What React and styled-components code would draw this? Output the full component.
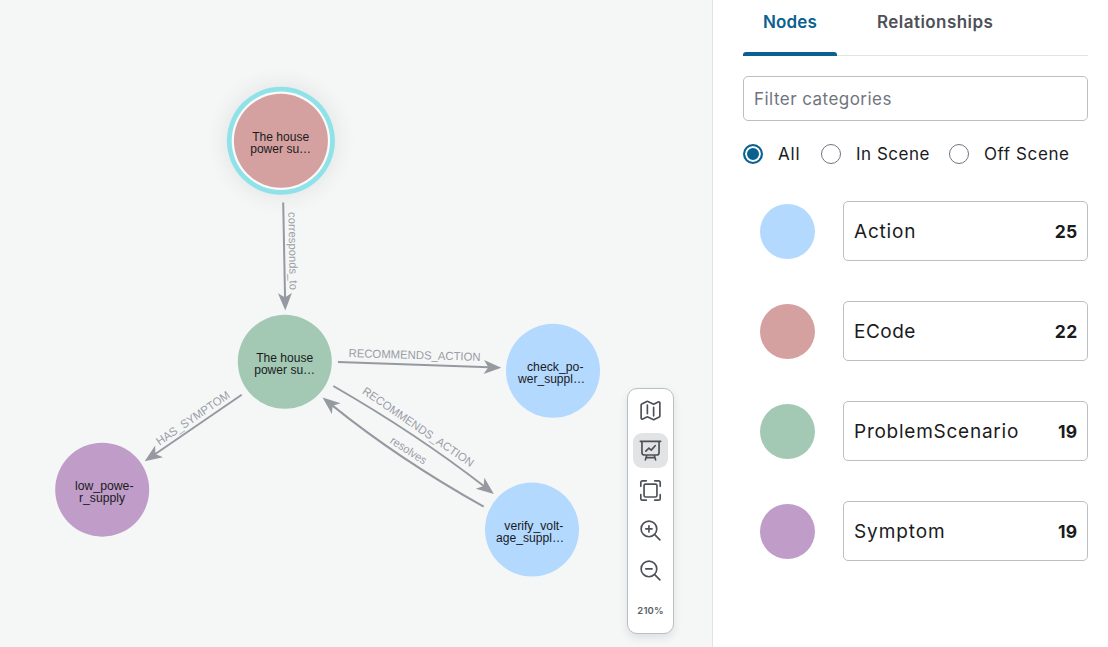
import React from 'react';
import styled, { createGlobalStyle } from 'styled-components';

const GlobalStyle = createGlobalStyle`
  *, *::before, *::after { box-sizing: border-box; }
  body { margin: 0; background: #fff; font-family: Inter, "Liberation Sans", sans-serif; color: #1a1b1d; }
`;

const Layout = styled.div`
  display: flex;
  width: 1108px;
  height: 647px;
  overflow: hidden;
`;

const GraphArea = styled.main`
  position: relative;
  flex: 0 0 712px;
  background: #f5f7f7;
`;

const Canvas = styled.svg`
  display: block;
  font-family: "Liberation Sans", Arial, sans-serif;
`;

const Toolbar = styled.div`
  position: absolute;
  top: 388px;
  left: 627px;
  width: 47px;
  height: 246px;
  padding-top: 4px;
  display: flex;
  flex-direction: column;
  align-items: center;
  gap: 5px;
  background: #fff;
  border: 1px solid #bbbec3;
  border-radius: 10px;
  box-shadow: 0 4px 8px rgba(12, 26, 37, 0.1);
`;

const ToolButton = styled.button`
  display: flex;
  align-items: center;
  justify-content: center;
  width: 35px;
  height: 35px;
  padding: 0;
  border: 0;
  border-radius: 9px;
  color: #4d5157;
  background: ${(p) => (p.$active ? '#e2e3e5' : 'transparent')};
`;

const ZoomLevel = styled.span`
  display: flex;
  align-items: center;
  height: 35px;
  font-size: 9.5px;
  font-weight: 600;
  letter-spacing: 0.15px;
  color: #5a5f66;
`;

const Icon = styled.svg`
  width: 25px;
  height: 25px;
  fill: none;
  stroke: currentColor;
  stroke-width: 1.6;
  stroke-linecap: round;
  stroke-linejoin: round;
`;

const Panel = styled.aside`
  flex: 1;
  display: flex;
  flex-direction: column;
  padding: 0 20px 0 30px;
  background: #fff;
  border-left: 1px solid #e2e3e5;
`;

const Tabs = styled.div`
  display: flex;
  height: 56px;
  gap: 20px;
  border-bottom: 1px solid #e2e3e5;
`;

const Tab = styled.button`
  height: 56px;
  padding: 12px 20px 0;
  display: flex;
  align-items: flex-start;
  position: relative;
  border: 0;
  background: none;
  font: 600 17px/20px Inter, sans-serif;
  letter-spacing: ${(p) => p.$spacing};
  white-space: nowrap;
  color: ${(p) => (p.$active ? '#0a6190' : '#4d5157')};

  &::after {
    content: '';
    position: absolute;
    left: 0;
    right: 0;
    bottom: 0;
    height: 4px;
    border-radius: 3px 3px 0 0;
    background: ${(p) => (p.$active ? '#0a6190' : 'transparent')};
  }
`;

const FilterInput = styled.input`
  width: 345px;
  height: 45px;
  margin-top: 20px;
  padding: 0 10px;
  border: 1px solid #bbbec3;
  border-radius: 5px;
  font: 400 17px Inter, sans-serif;
  letter-spacing: 0.46px;

  &::placeholder { color: #6f757e; opacity: 1; }
`;

const RadioGroup = styled.div`
  display: flex;
  gap: 20px;
  height: 20px;
  margin-top: 23px;
`;

const RadioLabel = styled.label`
  display: flex;
  align-items: center;
  gap: 15px;
  width: ${(p) => p.$width};
  font-size: 17px;
  line-height: 20px;
  letter-spacing: ${(p) => p.$spacing};
  white-space: nowrap;
`;

const Radio = styled.input`
  appearance: none;
  flex: none;
  width: 20px;
  height: 20px;
  margin: 0;
  border: 1px solid #6f757e;
  border-radius: 50%;

  &:checked {
    border: 2px solid #0a6190;
    background: #0a6190;
    box-shadow: inset 0 0 0 2px #fff;
  }
`;

const CategoryList = styled.div`
  display: flex;
  flex-direction: column;
  gap: 40px;
  margin-top: 37px;
`;

const CategoryRow = styled.div`
  display: flex;
  align-items: center;
  gap: 28px;
  padding-left: 17px;
`;

const Swatch = styled.span`
  flex: none;
  width: 55px;
  height: 55px;
  border-radius: 50%;
  background: ${(p) => p.$color};
`;

const CategoryCard = styled.div`
  flex: 1;
  display: flex;
  align-items: center;
  justify-content: space-between;
  height: 60px;
  padding: 0 9.5px 0 10px;
  border: 1px solid #bbbec3;
  border-radius: 5px;
`;

const CategoryName = styled.span`
  font-size: 19px;
  letter-spacing: ${(p) => p.$spacing};
`;

const Count = styled.span`
  font-size: 17.5px;
  font-weight: 700;
  letter-spacing: 0.3px;
`;

const nodes = [
  { x: 280.9, y: 140.8, color: '#d5a1a0', selected: true, lines: [['The house', 252.2, 141, 57], ['power su…', 250.2, 153, 61]] },
  { x: 284.8, y: 361.8, color: '#a3c9b4', lines: [['The house', 256.2, 362, 57], ['power su…', 254.2, 374, 61]] },
  { x: 553, y: 370.8, color: '#b3d9ff', lines: [['check_po-', 527, 371, 56.5], ['wer_suppl…', 518, 383, 67]] },
  { x: 532, y: 529.6, color: '#b3d9ff', lines: [['verify_volt-', 504.3, 530, 59], ['age_suppl…', 496, 542, 68]] },
  { x: 102.2, y: 489.7, color: '#bf9dc8', lines: [['low_powe-', 75, 490, 58.5], ['r_supply', 79, 502, 46]] },
];

const edges = [
  { from: [283.2, 202.5], ctrl: [284.2, 256], to: [285.3, 310.5], label: 'corresponds_to', at: [288.3, 212], angle: 89, length: 78 },
  { from: [338, 362], ctrl: [420, 364.8], to: [501.3, 367.7], label: 'RECOMMENDS_ACTION', at: [348.5, 357], angle: 1.7, length: 132 },
  { from: [241.7, 394.7], ctrl: [193, 428], to: [144.7, 461.3], label: 'HAS_SYMPTOM', at: [159.4, 445.8], angle: -34.4, length: 86.5 },
  { from: [333.3, 386], ctrl: [417.2, 434.3], to: [493.9, 493.9], label: 'RECOMMENDS_ACTION', at: [361.5, 393], angle: 34.3, length: 132 },
  { from: [483.7, 506.7], ctrl: [398.5, 459], to: [322.6, 397.6], label: 'resolves', at: [389.2, 442.5], angle: 33, length: 41 },
];

const categories = [
  { name: 'Action', count: 25, color: '#b3d9ff', spacing: '0.8px' },
  { name: 'ECode', count: 22, color: '#d5a1a0', spacing: '0.5px' },
  { name: 'ProblemScenario', count: 19, color: '#a3c9b4', spacing: '0.75px' },
  { name: 'Symptom', count: 19, color: '#bf9dc8', spacing: '0.9px' },
];

function Edge({ from, ctrl, to, label, at, angle, length }) {
  const theta = Math.atan2(to[1] - ctrl[1], to[0] - ctrl[0]);
  const end = [to[0] - 12 * Math.cos(theta), to[1] - 12 * Math.sin(theta)];
  return (
    <g>
      <path d={`M${from} Q${ctrl} ${end}`} fill="none" stroke="#959aa1" strokeWidth="2" />
      <path
        d="M0 0L-17.5 -7L-13 0L-17.5 7Z"
        fill="#959aa1"
        transform={`translate(${to}) rotate(${(theta * 180) / Math.PI})`}
      />
      <text
        fontSize="11.6"
        fill="#9a9da6"
        textLength={length}
        lengthAdjust="spacingAndGlyphs"
        transform={`translate(${at}) rotate(${angle})`}
      >
        {label}
      </text>
    </g>
  );
}

function Node({ x, y, color, selected, lines }) {
  return (
    <g>
      {selected && (
        <>
          <circle cx={x} cy={y} r="74" fill="url(#halo)" />
          <circle cx={x} cy={y} r="54" fill="#8fe3e8" />
          <circle cx={x} cy={y} r="49.2" fill="#fbfafa" />
        </>
      )}
      <circle cx={x} cy={y} r="47" fill={color} />
      {lines.map(([text, tx, ty, length]) => (
        <text key={text} x={tx} y={ty} fontSize="12" fill="#1a1b1d" textLength={length} lengthAdjust="spacingAndGlyphs">
          {text}
        </text>
      ))}
    </g>
  );
}

const MapIcon = () => (
  <Icon viewBox="0 0 24 24">
    <path d="M9 6.75V15m6-6v8.25m.503 3.498 4.875-2.437c.381-.19.622-.58.622-1.006V4.82c0-.836-.88-1.38-1.628-1.006l-3.869 1.934c-.317.159-.69.159-1.006 0L9.503 3.252a1.125 1.125 0 0 0-1.006 0L3.622 5.689C3.24 5.88 3 6.27 3 6.695V19.18c0 .836.88 1.38 1.628 1.006l3.869-1.934c.317-.159.69-.159 1.006 0l4.994 2.497c.317.158.69.158 1.006 0Z" />
  </Icon>
);

const PresentationIcon = () => (
  <Icon viewBox="0 0 24 24">
    <path d="M2.2 3.2h19.6M3.8 3.2v10.9a2.2 2.2 0 0 0 2.2 2.2h12a2.2 2.2 0 0 0 2.2-2.2V3.2M8.4 16.3l-1.3 4.7M15.6 16.3l1.3 4.7M7.8 18.9h8.4M7.5 12.6l3-2.8 2.2 1.8 3.8-4.2" />
  </Icon>
);

const FitIcon = () => (
  <Icon viewBox="0 0 24 24">
    <rect x="5.8" y="5.8" width="12.4" height="12.4" rx="1.5" />
    <path d="M2.7 8V4.2a1.5 1.5 0 0 1 1.5-1.5H8M16 2.7h3.8a1.5 1.5 0 0 1 1.5 1.5V8M21.3 16v3.8a1.5 1.5 0 0 1-1.5 1.5H16M8 21.3H4.2a1.5 1.5 0 0 1-1.5-1.5V16" />
  </Icon>
);

const ZoomIcon = ({ plus }) => (
  <Icon viewBox="0 0 24 24">
    <path d="m21 21-5.197-5.197m0 0A7.5 7.5 0 1 0 5.196 5.196a7.5 7.5 0 0 0 10.607 10.607ZM13.5 10.5h-6" />
    {plus && <path d="M10.5 7.5v6" />}
  </Icon>
);

export default function App() {
  return (
    <Layout>
      <GlobalStyle />
      <GraphArea>
        <Canvas width="712" height="647" viewBox="0 0 712 647">
          <defs>
            <radialGradient id="halo">
              <stop offset="0.7" stopColor="#8c8c90" stopOpacity="0.11" />
              <stop offset="0.85" stopColor="#8c8c90" stopOpacity="0.04" />
              <stop offset="1" stopColor="#8c8c90" stopOpacity="0" />
            </radialGradient>
          </defs>
          {nodes.map((node, i) => <Node key={i} {...node} />)}
          {edges.map((edge, i) => <Edge key={i} {...edge} />)}
        </Canvas>
        <Toolbar>
          <ToolButton aria-label="Map"><MapIcon /></ToolButton>
          <ToolButton aria-label="Presentation" $active><PresentationIcon /></ToolButton>
          <ToolButton aria-label="Fit"><FitIcon /></ToolButton>
          <ToolButton aria-label="Zoom in"><ZoomIcon plus /></ToolButton>
          <ToolButton aria-label="Zoom out"><ZoomIcon /></ToolButton>
          <ZoomLevel>210%</ZoomLevel>
        </Toolbar>
      </GraphArea>
      <Panel>
        <Tabs>
          <Tab $active $spacing="0.15px">Nodes</Tab>
          <Tab $spacing="0.45px">Relationships</Tab>
        </Tabs>
        <FilterInput placeholder="Filter categories" />
        <RadioGroup>
          <RadioLabel $width="58px" $spacing="0.8px"><Radio type="radio" name="scope" defaultChecked />All</RadioLabel>
          <RadioLabel $width="108px" $spacing="0.5px"><Radio type="radio" name="scope" />In Scene</RadioLabel>
          <RadioLabel $width="120px" $spacing="0.6px"><Radio type="radio" name="scope" />Off Scene</RadioLabel>
        </RadioGroup>
        <CategoryList>
          {categories.map((c) => (
            <CategoryRow key={c.name}>
              <Swatch $color={c.color} />
              <CategoryCard>
                <CategoryName $spacing={c.spacing}>{c.name}</CategoryName>
                <Count>{c.count}</Count>
              </CategoryCard>
            </CategoryRow>
          ))}
        </CategoryList>
      </Panel>
    </Layout>
  );
}
